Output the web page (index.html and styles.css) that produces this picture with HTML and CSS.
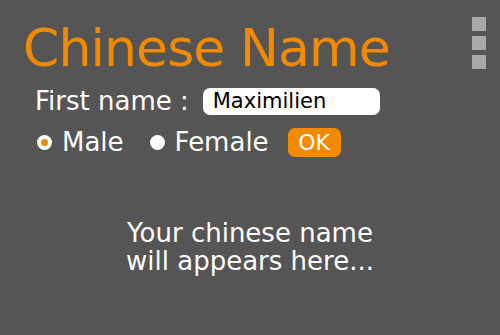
FILE: index.html
```html
<!DOCTYPE html>
<html lang="en">
<head>
    <meta charset="UTF-8">
    <meta name="viewport" content="width=device-width, initial-scale=1.0">
    <title>Chinese Name</title>
    <link rel="stylesheet" href="styles.css">
</head>
<body>
    <header class="top">
        <h1 class="title">Chinese Name</h1>
        <div class="menu">
            <span></span>
            <span></span>
            <span></span>
        </div>
    </header>

    <div class="form">
        <div class="row">
            <label for="firstName">First name :</label>
            <input type="text" id="firstName" value="Maximilien" />
        </div>
        <div class="row">
            <label class="radio male"><span class="dot on"></span>Male</label>
            <label class="radio"><span class="dot"></span>Female</label>
            <button class="ok">OK</button>
        </div>
    </div>

    <p class="result">Your chinese name<br>will appears here...</p>
</body>
</html>
```

FILE: styles.css
```css
html, body {
    height: 100%;
}

body {
    margin: 0;
    background-color: #555555;
    font-family: "DejaVu Sans", sans-serif;
    color: #fff;
    overflow: hidden;
}

.top {
    display: flex;
    justify-content: space-between;
    align-items: flex-start;
    padding: 20px 14px 0 23px;
}

.title {
    margin: 0;
    font-size: 52px;
    font-weight: normal;
    line-height: 56px;
    letter-spacing: -0.9px;
    color: #f28a00;
}

.menu {
    display: flex;
    flex-direction: column;
    gap: 5px;
    margin-top: -3px;
}

.menu span {
    width: 14px;
    height: 14px;
    background-color: #a9a9a9;
}

.form {
    display: flex;
    flex-direction: column;
    gap: 11px;
    padding: 10px 0 0 35px;
    font-size: 26px;
}

.row {
    display: flex;
    align-items: center;
    height: 30px;
}

.row label {
    margin-right: 14px;
}

input[type="text"] {
    box-sizing: border-box;
    width: 177px;
    height: 27px;
    padding: 0 10px;
    border: none;
    border-radius: 7px;
    font-family: "DejaVu Sans", sans-serif;
    font-size: 21px;
    color: #000;
    background-color: #fff;
}

.radio {
    display: flex;
    align-items: center;
}

.row .male {
    margin-right: 24px;
}

.dot {
    width: 15px;
    height: 15px;
    border-radius: 50%;
    background-color: #fff;
    margin: 0 10px 0 2px;
    display: flex;
    align-items: center;
    justify-content: center;
}

.dot.on::after {
    content: "";
    width: 7px;
    height: 7px;
    border-radius: 50%;
    background-color: #f28a00;
}

.ok {
    margin-left: 5px;
    width: 53px;
    height: 29px;
    border: none;
    border-radius: 7px;
    background-color: #f28a00;
    color: #fff;
    font-family: "DejaVu Sans", sans-serif;
    font-size: 22px;
    padding: 0;
}

.result {
    margin: 62px 0 0;
    text-align: center;
    font-size: 26px;
    line-height: 28px;
}
```
